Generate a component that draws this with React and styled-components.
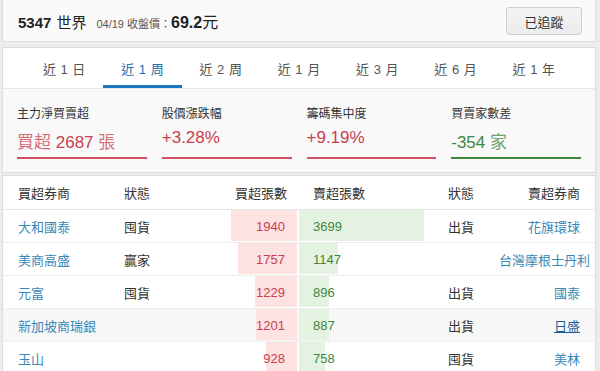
import React from 'react';
import styled, { createGlobalStyle, css } from 'styled-components';

const GlobalStyle = createGlobalStyle`
  body {
    margin: 0;
    background: #ececec;
    font-family: "Liberation Sans", "Noto Sans CJK TC", sans-serif;
    color: #333;
  }
`;

const Page = styled.div`
  width: 594px;
  padding: 0 3px 0 2px;
`;

const Card = styled.div`
  background: #fff;
  border: 1px solid #dcdcdc;
  border-top: ${p => (p.flushTop ? 'none' : '1px solid #dcdcdc')};
  margin-top: ${p => p.gap || 0}px;
`;

const Header = styled(Card)`
  height: 41px;
  display: flex;
  align-items: center;
  justify-content: space-between;
  padding: 0 13px 0 15px;
  background: #fafafa;
`;

const Title = styled.div`
  display: flex;
  align-items: baseline;
  gap: 10px;
`;

const StockName = styled.span`
  font-size: 15px;
  color: #222;
  b {
    font-weight: 700;
    margin-right: 5px;
  }
`;

const Close = styled.span`
  font-size: 11px;
  color: #555;
  strong {
    font-size: 16px;
    color: #222;
    font-weight: 700;
  }
  em {
    font-style: normal;
    font-size: 16px;
    color: #222;
  }
`;

const TrackButton = styled.button`
  width: 76px;
  height: 28px;
  margin-top: 1px;
  border: 1px solid #cfcfcf;
  border-radius: 3px;
  background: linear-gradient(#f4f4f4, #ebebeb);
  font-family: inherit;
  font-size: 13px;
  color: #333;
  padding: 0;
`;

const Tabs = styled.div`
  display: flex;
  padding: 0 22px;
  border-bottom: 1px solid #e6e6e6;
  background: #fff;
`;

const Tab = styled.div`
  flex: 1;
  height: 40px;
  box-sizing: border-box;
  display: flex;
  align-items: center;
  justify-content: center;
  font-size: 13px;
  color: #555;
  word-spacing: 1px;
  padding-top: 1px;
  ${p =>
    p.active &&
    css`
      color: #1d6fb0;
      border-bottom: 3px solid #1f77c4;
      padding-top: 4px;
    `}
`;

const Stats = styled.div`
  display: grid;
  grid-template-columns: repeat(4, 1fr);
  column-gap: 15px;
  padding: 15px 14px 13px 14px;
  background: #f9f9f9;
`;

const Stat = styled.div`
  border-bottom: 2px solid ${p => (p.up ? '#d0525c' : '#3d8a3d')};
  padding-bottom: 4px;
`;

const StatLabel = styled.div`
  font-size: 12px;
  color: #333;
  height: 16px;
`;

const StatValue = styled.div`
  margin-top: 8px;
  font-size: 17px;
  color: ${p => (p.up ? '#c9404f' : '#3d873d')};
  small {
    font-size: 17px;
    opacity: 0.75;
  }
`;

const Table = styled(Card)`
  margin-top: 2px;
`;

const Row = styled.div`
  display: grid;
  grid-template-columns: 106px 70px 120px 130px 70px 1fr;
  height: ${p => (p.head ? 33 : 32)}px;
  border-bottom: 1px solid ${p => (p.head ? '#e4e4e4' : '#ededed')};
  background: ${p => (p.hover ? '#f7f7f7' : '#fff')};
  font-size: 13px;
  &:last-child {
    border-bottom: none;
  }
`;

const Cell = styled.div`
  position: relative;
  display: flex;
  align-items: center;
  justify-content: ${p => (p.right ? 'flex-end' : 'flex-start')};
  padding: ${p => p.pad || '0'};
  color: #333;
  white-space: nowrap;
`;

const Broker = styled.span`
  color: ${p => (p.hover ? '#1e5e98' : '#3a88b5')};
  text-decoration: ${p => (p.hover ? 'underline' : 'none')};
`;

const Bar = styled.div`
  position: absolute;
  top: 0;
  bottom: 1px;
  ${p => (p.buy ? 'right: 0;' : 'left: 0;')}
  background: ${p => (p.buy ? '#fde2e2' : '#e4f3e1')};
`;

const Num = styled.span`
  position: relative;
  color: ${p => (p.buy ? '#c9404f' : '#3d873d')};
`;

const tabs = ['近 1 日', '近 1 周', '近 2 周', '近 1 月', '近 3 月', '近 6 月', '近 1 年'];

const rows = [
  { buyer: '大和國泰', bState: '囤貨', buy: 1940, sell: 3699, sState: '出貨', seller: '花旗環球' },
  { buyer: '美商高盛', bState: '贏家', buy: 1757, sell: 1147, sState: '', seller: '台灣摩根士丹利' },
  { buyer: '元富', bState: '囤貨', buy: 1229, sell: 896, sState: '出貨', seller: '國泰' },
  { buyer: '新加坡商瑞銀', bState: '', buy: 1201, sell: 887, sState: '出貨', seller: '日盛', hover: true },
  { buyer: '玉山', bState: '', buy: 928, sell: 758, sState: '囤貨', seller: '美林' },
];

const barWidth = v => Math.round((v / 3699) * 125);

export default function App() {
  return (
    <Page>
      <GlobalStyle />
      <Header flushTop>
        <Title>
          <StockName>
            <b>5347</b>世界
          </StockName>
          <Close>
            04/19 收盤價：<strong>69.2</strong>
            <em>元</em>
          </Close>
        </Title>
        <TrackButton>已追蹤</TrackButton>
      </Header>

      <Card gap={5}>
        <Tabs>
          {tabs.map((t, i) => (
            <Tab key={t} active={i === 1}>
              {t}
            </Tab>
          ))}
        </Tabs>
        <Stats>
          <Stat up>
            <StatLabel>主力淨買賣超</StatLabel>
            <StatValue up>
              <small>買超</small> 2687 <small>張</small>
            </StatValue>
          </Stat>
          <Stat up>
            <StatLabel>股價漲跌幅</StatLabel>
            <StatValue up>+3.28%</StatValue>
          </Stat>
          <Stat up>
            <StatLabel>籌碼集中度</StatLabel>
            <StatValue up>+9.19%</StatValue>
          </Stat>
          <Stat>
            <StatLabel>買賣家數差</StatLabel>
            <StatValue>
              -354 <small>家</small>
            </StatValue>
          </Stat>
        </Stats>
      </Card>

      <Table>
        <Row head>
          <Cell pad="0 0 0 15px">買超券商</Cell>
          <Cell pad="0 0 0 15px">狀態</Cell>
          <Cell right pad="0 12px 0 0">買超張數</Cell>
          <Cell pad="0 0 0 14px">賣超張數</Cell>
          <Cell pad="0 0 0 19px">狀態</Cell>
          <Cell right pad="0 15px 0 0">賣超券商</Cell>
        </Row>
        {rows.map(r => (
          <Row key={r.buyer} hover={r.hover}>
            <Cell pad="0 0 0 15px">
              <Broker>{r.buyer}</Broker>
            </Cell>
            <Cell pad="0 0 0 15px">{r.bState}</Cell>
            <Cell right pad="0 12px 0 0" style={{ marginRight: 2 }}>
              <Bar buy style={{ width: barWidth(r.buy) }} />
              <Num buy>{r.buy}</Num>
            </Cell>
            <Cell pad="0 0 0 14px">
              <Bar style={{ width: barWidth(r.sell) }} />
              <Num>{r.sell}</Num>
            </Cell>
            <Cell pad="0 0 0 19px">{r.sState}</Cell>
            <Cell right pad="0 15px 0 0">
              <Broker hover={r.hover}>{r.seller}</Broker>
            </Cell>
          </Row>
        ))}
      </Table>
    </Page>
  );
}
